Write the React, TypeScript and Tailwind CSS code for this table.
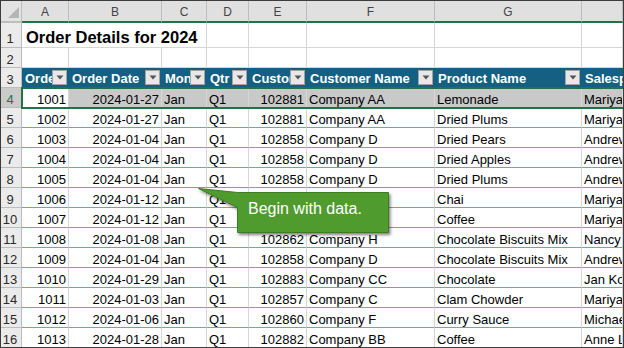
import React from 'react';

const COLS = [
  'w-[47px]',
  'w-[93px]',
  'w-[45px]',
  'w-[42px]',
  'w-[58px]',
  'w-[128px]',
  'w-[147px]',
  'flex-1 min-w-0',
];
const LETTERS = ['A', 'B', 'C', 'D', 'E', 'F', 'G', ''];
const HEADERS = ['Order ID', 'Order Date', 'Month', 'Qtr', 'Customer ID', 'Customer Name', 'Product Name', 'Salesperson'];
const RIGHT = [true, true, false, false, true, false, false, false];

const DATA: string[][] = [
  ['1001', '2024-01-27', 'Jan', 'Q1', '102881', 'Company AA', 'Lemonade', 'Mariya Sergienko'],
  ['1002', '2024-01-27', 'Jan', 'Q1', '102881', 'Company AA', 'Dried Plums', 'Mariya Sergienko'],
  ['1003', '2024-01-04', 'Jan', 'Q1', '102858', 'Company D', 'Dried Pears', 'Andrew Cencini'],
  ['1004', '2024-01-04', 'Jan', 'Q1', '102858', 'Company D', 'Dried Apples', 'Andrew Cencini'],
  ['1005', '2024-01-04', 'Jan', 'Q1', '102858', 'Company D', 'Dried Plums', 'Andrew Cencini'],
  ['1006', '2024-01-12', 'Jan', 'Q1', '', '', 'Chai', 'Mariya Sergienko'],
  ['1007', '2024-01-12', 'Jan', 'Q1', '', '', 'Coffee', 'Mariya Sergienko'],
  ['1008', '2024-01-08', 'Jan', 'Q1', '102862', 'Company H', 'Chocolate Biscuits Mix', 'Nancy Freehafer'],
  ['1009', '2024-01-04', 'Jan', 'Q1', '102858', 'Company D', 'Chocolate Biscuits Mix', 'Andrew Cencini'],
  ['1010', '2024-01-29', 'Jan', 'Q1', '102883', 'Company CC', 'Chocolate', 'Jan Kotas'],
  ['1011', '2024-01-03', 'Jan', 'Q1', '102857', 'Company C', 'Clam Chowder', 'Mariya Sergienko'],
  ['1012', '2024-01-06', 'Jan', 'Q1', '102860', 'Company F', 'Curry Sauce', 'Michael Neipper'],
  ['1013', '2024-01-28', 'Jan', 'Q1', '102882', 'Company BB', 'Coffee', 'Anne Larsen'],
];

function RowHead({ n, sel, extra }: { n: number; sel?: boolean; extra?: string }) {
  return (
    <div
      className={
        'w-[21px] h-full shrink-0 flex items-end justify-center pr-[2px] border-r border-b border-[#bcbcbc] text-[13px] ' +
        (sel ? 'bg-[#cbcbcb] text-[#217346] ' : 'bg-[#ebebeb] text-[#2a2a2a] ') +
        (extra || '')
      }
    >
      <span className="leading-[14px]">{n}</span>
    </div>
  );
}

function Dropdown() {
  return (
    <div className="w-[15px] h-[15px] shrink-0 self-center mr-[2px] bg-[#e8e8e8] border border-[#a3a3a3] flex items-center justify-center">
      <svg width="8" height="5" viewBox="0 0 8 5">
        <path d="M0.5 0.5 L7.5 0.5 L4 4.5 Z" fill="#555555" />
      </svg>
    </div>
  );
}

export default function App() {
  return (
    <div className="relative w-[624px] h-[348px] overflow-hidden border border-[#3c3c3c] bg-white text-black font-[family-name:'Liberation_Sans',Arial,sans-serif]">
      {/* column letters */}
      <div className="flex h-[22px]">
        <div className="relative w-[21px] h-full shrink-0 bg-[#e3e3e3] border-r border-b-2 border-[#bdbdbd]">
          <svg className="absolute left-0 top-0" width="20" height="20" viewBox="0 0 20 20">
            <path d="M18 6 L18 17 L7 17 Z" fill="#b5b5b5" />
          </svg>
        </div>
        {LETTERS.map((l, i) => (
          <div
            key={i}
            className={
              'h-full shrink-0 flex items-center justify-center bg-[#e0e0e0] border-r border-r-[#bdbdbd] border-b-2 border-b-[#217346] text-[12px] text-[#444444] ' +
              COLS[i]
            }
          >
            <span className="leading-[18px] pt-[1px]">{l}</span>
          </div>
        ))}
      </div>

      {/* row 1 */}
      <div className="flex h-[25px]">
        <RowHead n={1} extra="pb-[1px]" />
        <div className="w-[185px] h-full shrink-0 flex items-end pl-[4px] pb-[1px] border-r border-b border-[#d6d6d6] whitespace-nowrap">
          <span className="text-[16.5px] font-bold leading-[17px]">Order Details for 2024</span>
        </div>
        {COLS.slice(3).map((w, i) => (
          <div key={i} className={'h-full shrink-0 border-r border-b border-[#d6d6d6] ' + w} />
        ))}
      </div>

      {/* row 2 */}
      <div className="flex h-[20px]">
        <RowHead n={2} />
        {COLS.map((w, i) => (
          <div key={i} className={'h-full shrink-0 border-r border-b border-[#d6d6d6] ' + w} />
        ))}
      </div>

      {/* row 3 : table header */}
      <div className="flex h-[20px]">
        <RowHead n={3} />
        {HEADERS.map((h, i) => (
          <div
            key={h}
            className={'h-full shrink-0 flex bg-[#156082] border-b border-[#156082] text-white font-bold text-[13px] ' + COLS[i]}
          >
            <span className="flex-1 min-w-0 self-end overflow-hidden whitespace-nowrap pl-[3px] pb-[1px] leading-[14px]">{h}</span>
            {i < 7 && <Dropdown />}
          </div>
        ))}
      </div>

      {/* data rows */}
      {DATA.map((row, r) => {
        const sel = r === 0;
        return (
          <div key={r} className="flex h-[20px]">
            <RowHead n={r + 4} sel={sel} />
            {row.map((v, c) => (
              <div
                key={c}
                className={
                  'h-full shrink-0 flex items-end overflow-hidden whitespace-nowrap px-[2px] border-r border-r-[#d6d6d6] border-b text-[13px] ' +
                  (sel ? 'border-b-transparent ' : 'border-b-[#44b3e1] ') +
                  (sel && c > 0 ? 'bg-[#c9c9c9] ' : 'bg-white ') +
                  (RIGHT[c] ? 'justify-end ' : 'justify-start ') +
                  COLS[c]
                }
              >
                <span className="leading-[14px]">{v}</span>
              </div>
            ))}
          </div>
        );
      })}

      {/* selection rectangle for row 4 */}
      <div className="absolute left-[20px] top-[86px] w-[620px] h-[22px] border-2 border-[#217346] pointer-events-none" />

      {/* callout */}
      <svg className="absolute left-[189px] top-[183px]" width="215" height="60" viewBox="0 0 215 60">
        <defs>
          <filter id="sh" x="-10%" y="-20%" width="130%" height="150%">
            <feDropShadow dx="1.5" dy="2" stdDeviation="1.4" floodColor="#000000" floodOpacity="0.5" />
          </filter>
        </defs>
        <path
          d="M8.5 4.5 L47.5 8.5 L198.5 8.5 L198.5 48.5 L47.5 48.5 L47.5 23.5 Z"
          fill="#4f9b2e"
          stroke="#3e7c24"
          strokeWidth="1"
          filter="url(#sh)"
        />
      </svg>
      <div className="absolute left-[247px] top-[199px] text-white text-[16px] leading-[18px] whitespace-nowrap">
        Begin with data.
      </div>
    </div>
  );
}
